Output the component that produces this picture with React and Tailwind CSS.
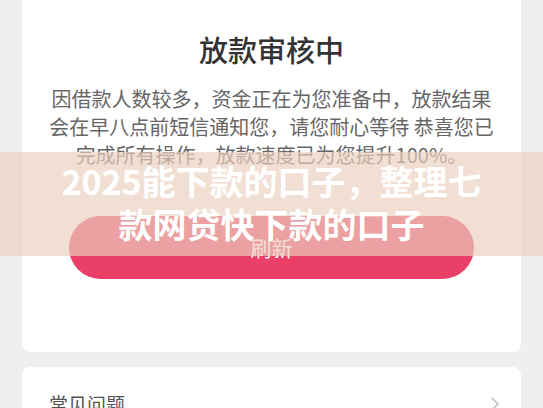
import React from 'react';
import { ChevronRight } from 'lucide-react';

const font = { fontFamily: '"Noto Sans CJK SC", "Noto Sans", sans-serif' };

const App = () => {
    return (
        <div className="relative h-[408px] overflow-hidden bg-[#efefef]" style={font}>
            {/* status card */}
            <div className="mx-[22px] bg-white rounded-b-lg pt-[29px] pb-[73px]">
                <h1 className="text-center text-[29px] leading-[40px] font-medium text-[#333]">放款审核中</h1>
                <p className="mt-[16px] text-center text-[20px] leading-[28px] text-[#666] whitespace-nowrap">
                    因借款人数较多，资金正在为您准备中，放款结果<br />
                    会在早八点前短信通知您，请您耐心等待 恭喜您已<br />
                    完成所有操作，放款速度已为您提升100%。
                </p>
                <button className="mt-[47px] mx-[47px] w-[405px] h-[63px] rounded-full bg-[#ea4068] text-white text-[21px] flex items-center justify-center">
                    刷新
                </button>
            </div>

            {/* faq card */}
            <div className="mx-[22px] mt-[15px] bg-white rounded-lg pl-[27px] pr-[14px] pt-[23px] pb-4 flex items-center justify-between">
                <span className="text-[19px] leading-[28px] text-[#555]">常见问题</span>
                <ChevronRight className="w-6 h-6 text-[#bdbdbd]" strokeWidth={1.5} />
            </div>

            {/* title banner */}
            <div className="absolute left-0 right-0 top-[152px] h-[104px] bg-[rgba(236,208,190,0.67)] flex items-center justify-center">
                <h2 className="-mt-[4px] text-center text-white font-bold text-[34px] leading-[43px] whitespace-nowrap">
                    2025能下款的口子，整理七<br />款网贷快下款的口子
                </h2>
            </div>
        </div>
    );
};

export default App;
